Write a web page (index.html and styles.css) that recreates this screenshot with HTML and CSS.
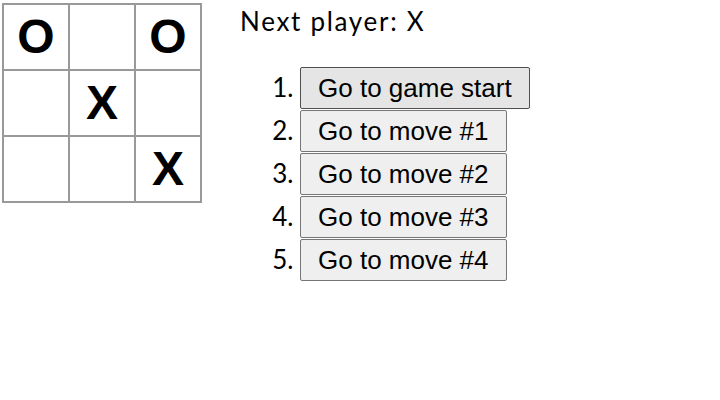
FILE: index.html
```html
<!DOCTYPE html>
<html>
<head>
<meta charset="utf-8">
<link rel="stylesheet" href="styles.css">
</head>
<body>
<div class="game">
  <div class="game-board">
    <div class="board-row">
      <button class="square">O</button>
      <button class="square"></button>
      <button class="square">O</button>
    </div>
    <div class="board-row">
      <button class="square"></button>
      <button class="square">X</button>
      <button class="square"></button>
    </div>
    <div class="board-row">
      <button class="square"></button>
      <button class="square"></button>
      <button class="square">X</button>
    </div>
  </div>
  <div class="game-info">
    <div class="status">Next player: X</div>
    <ol class="moves">
      <li><button class="move hover">Go to game start</button></li>
      <li><button class="move">Go to move #1</button></li>
      <li><button class="move">Go to move #2</button></li>
      <li><button class="move">Go to move #3</button></li>
      <li><button class="move">Go to move #4</button></li>
    </ol>
  </div>
</div>
</body>
</html>
```
FILE: styles.css
```css
html, body {
  margin: 0;
  padding: 0;
  background: #fff;
}
body {
  font-family: "Century Gothic", Lato, sans-serif;
  font-size: 26px;
  color: #000;
}
.game {
  display: flex;
  flex-direction: row;
  align-items: flex-start;
  padding: 3px 0 0 2px;
}
.game-board {
  display: flex;
  flex-direction: column;
}
.board-row {
  display: flex;
}
.board-row + .board-row {
  margin-top: -2px;
}
.square {
  box-sizing: border-box;
  width: 68px;
  height: 68px;
  margin: 0;
  padding: 0;
  background: #fff;
  border: 2px solid #999;
  border-radius: 0;
  font-family: "Liberation Sans", Arial, sans-serif;
  font-size: 48px;
  font-weight: bold;
  line-height: 64px;
  text-align: center;
  color: #000;
}
.square + .square {
  margin-left: -2px;
}
.game-info {
  margin-left: 38px;
}
.status {
  line-height: 31px;
  margin-top: 3px;
  letter-spacing: 1.7px;
}
.moves {
  margin: 30px 0 0;
  padding-left: 60px;
}
.moves li {
  margin: 0 0 1px;
}
.move {
  display: block;
  box-sizing: border-box;
  height: 42px;
  margin: 0;
  padding: 5px 17px;
  font-family: "Liberation Sans", Arial, sans-serif;
  font-size: 26px;
  line-height: 30px;
  color: #000;
  background: #efefef;
  border: 1px solid #767676;
  border-radius: 2px;
}
.move.hover {
  background: #e5e5e5;
  border-color: #4f4f4f;
}
```
